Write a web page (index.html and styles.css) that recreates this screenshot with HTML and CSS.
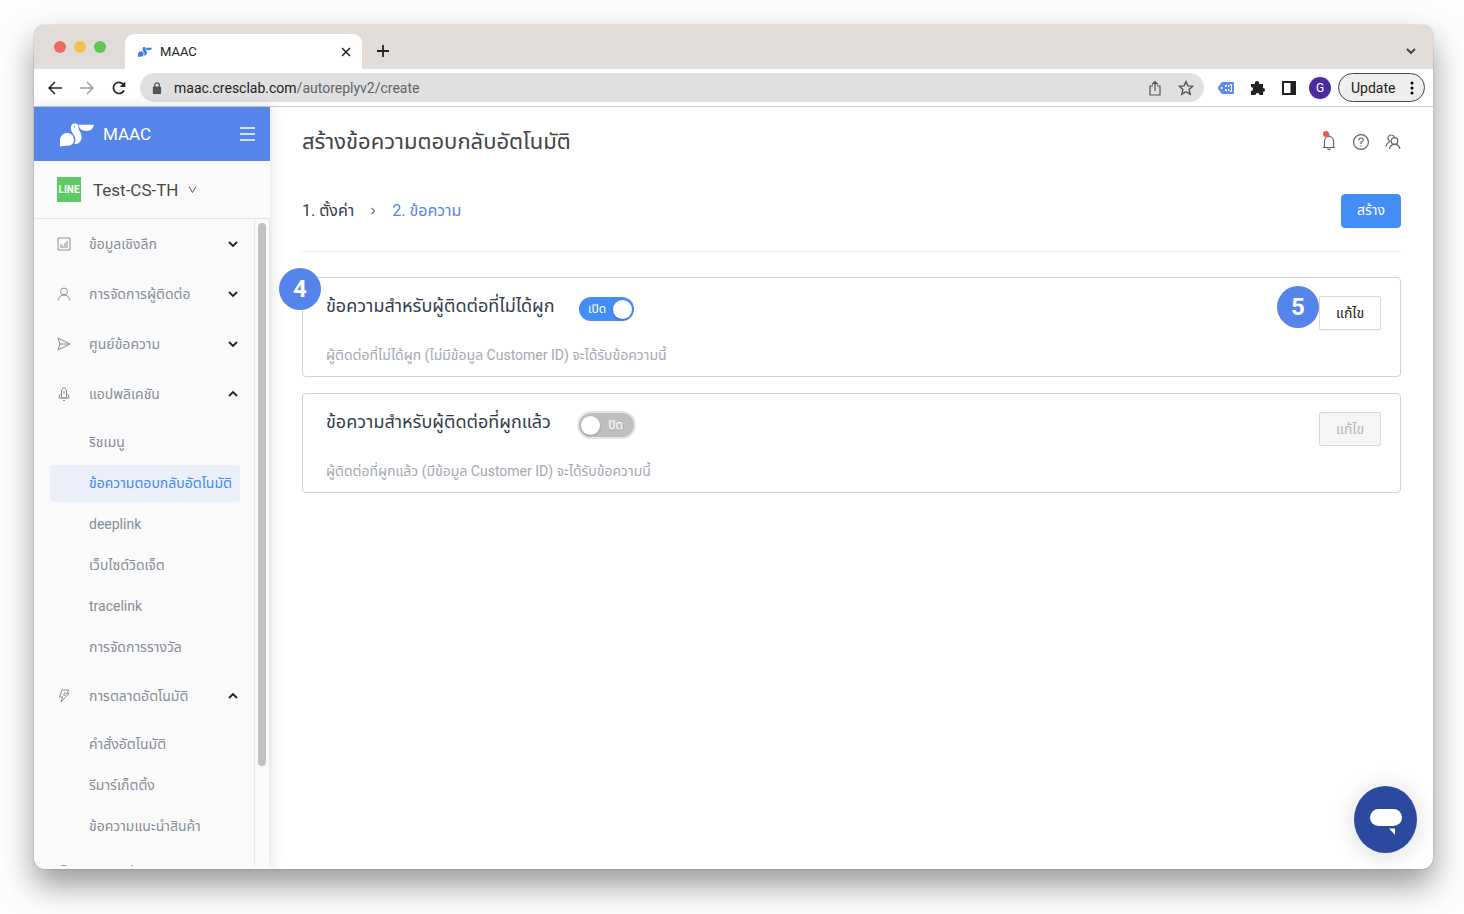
FILE: index.html
```html
<!DOCTYPE html>
<html lang="th">

	<head>
		<meta charset="utf-8">
		<meta name="viewport" content="width=device-width, initial-scale=1.0">
		<title>MAAC</title>
		<link rel="stylesheet" href="styles.css">
	</head>
	<body>
		<!-- shared shapes -->
		<svg class="sprite" aria-hidden="true">
			<symbol id="chevron" viewBox="0 0 12 12">
				<path d="M2 4l4 4 4-4" fill="none" stroke="currentColor" stroke-width="1.800"/>
			</symbol>
			<symbol id="bird" viewBox="0 0 33 23">
				<path d="M0 23V16.500C0 12 3.500 9.500 7 9.500S13.500 12 13.500 16 10.500 22 6.500 22Q2.500 22 0 23z"/>
				<path d="M10.500 4.500C10.500 1.500 12.500 0 14.500 0c2 0 3.500 1.500 3.500 4C18 7.500 21 9 21 13.500 21 18 18 20.500 13.500 20.500 15.500 18 15.500 15 14 12.500 12.500 10 10.500 8 10.500 4.500z"/>
				<path d="M18 1.500H33Q32 7.500 25.500 7.500 19 7.500 18 1.500z"/>
				<circle cx="14" cy="3.500" r=".7" fill="#5584ea"/>
			</symbol>
		</svg>

		<div class="window">
			<div class="tabs">
				<div class="lights">
					<span class="light red"></span>
					<span class="light yellow"></span>
					<span class="light green"></span>
				</div>
				<div class="tab">
					<svg class="tab-logo" viewBox="0 0 33 23"><use href="#bird"/></svg>
					<span class="tab-name">MAAC</span>
					<button type="button" class="plain" aria-label="Close tab">
						<svg width="10" height="10" viewBox="0 0 10 10"><path d="M1 1l8 8M9 1l-8 8" stroke="#222" stroke-width="1.5"/></svg>
					</button>
				</div>
				<button type="button" class="plain new-tab" aria-label="New tab">
					<svg width="14" height="14" viewBox="0 0 14 14"><path d="M7 1v12M1 7h12" stroke="#222" stroke-width="1.800"/></svg>
				</button>
				<button type="button" class="plain tab-list" aria-label="Search tabs">
					<svg width="12" height="12"><use href="#chevron"/></svg>
				</button>
			</div>

			<div class="toolbar">
				<button type="button" class="plain" aria-label="Back">
					<svg width="14" height="14" viewBox="0 0 14 14"><path d="M7 1L1 7l6 6M1 7h13" fill="none" stroke="#222" stroke-width="1.5"/></svg>
				</button>
				<button type="button" class="plain" aria-label="Forward">
					<svg width="14" height="14" viewBox="0 0 14 14"><path d="M7 1l6 6-6 6M13 7H0" fill="none" stroke="#999" stroke-width="1.4"/></svg>
				</button>
				<button type="button" class="plain" aria-label="Reload">
					<svg width="14" height="14" viewBox="0 0 14 14"><path d="M12 9.5A5.6 5.6 0 1 1 11.5 3.5" fill="none" stroke="#222" stroke-width="1.7"/><path d="M13.3 .5v5.500h-5.500z" fill="#222"/></svg>
				</button>
				<div class="address">
					<svg width="10" height="12" viewBox="0 0 10 13"><rect x="0.500" y="5" width="9" height="8" rx="1" fill="#555"/><path d="M2.500 5.500V3.500a2.500 2.500 0 0 1 5 0v2" fill="none" stroke="#555" stroke-width="1.400"/></svg>
					<label for="url">maac.cresclab.com</label>
					<input type="text" id="url" value="/autoreplyv2/create">
					<button type="button" class="plain" aria-label="Share">
						<svg width="14" height="16" viewBox="0 0 14 16"><path d="M5 6H2v9h10V6H9M7 11V1.500M4 4.500l3-3 3 3" fill="none" stroke="#555" stroke-width="1.200"/></svg>
					</button>
					<button type="button" class="plain" aria-label="Bookmark">
						<svg width="16" height="16" viewBox="0 0 16 16"><path d="M8 1.500l1.900 4.400 4.800.4-3.600 3.200 1.100 4.700L8 11.700l-4.200 2.500 1.100-4.700L1.300 6.300l4.800-.4z" fill="none" stroke="#555" stroke-width="1.400"/></svg>
					</button>
				</div>
				<div class="extensions">
					<svg width="16" height="12" viewBox="0 0 16 12"><path d="M4 0h11q1 0 1 1v10q0 1-1 1H4L0 7V5z" fill="#5b8def"/><path d="M7 3h2v2H7zM7 7h2v2H7zM10 3h1.500v2H10zM10 7h1.500v2H10z" fill="#fff"/><path d="M12 2.500h1.500v7H12" fill="none" stroke="#fff"/><circle cx="3.500" cy="6" r="1" fill="#fff"/></svg>
					<svg width="16" height="16" viewBox="0 0 16 16"><path d="M1 4h4a2.200 2.200 0 1 1 4 0h4v4a2 2 0 1 1 0 4v3H9.500a2 2 0 0 0-4 0H1v-4a2 2 0 0 0 0-4z" fill="#222"/></svg>
					<svg width="14" height="14" viewBox="0 0 14 14"><path d="M1 1h12v12H1z" fill="none" stroke="#222" stroke-width="2"/><path d="M8.500 1H13v12H8.500z" fill="#222"/></svg>
					<span class="avatar">G</span>
				</div>
				<button type="button" class="update">
					Update
					<svg width="4" height="14" viewBox="0 0 4 14"><circle cx="2" cy="2" r="1.500"/><circle cx="2" cy="7" r="1.500"/><circle cx="2" cy="12" r="1.500"/></svg>
				</button>
			</div>

			<div class="app">
				<aside class="sidebar">
					<div class="brand">
						<svg class="brand-logo" viewBox="0 0 33 23"><use href="#bird"/></svg>
						<span class="brand-name">MAAC</span>
						<button type="button" class="plain" aria-label="Menu">
							<svg width="15" height="14" viewBox="0 0 15 14"><path d="M0 1h15M0 7h15M0 13h15" stroke="#fff" stroke-width="1.300"/></svg>
						</button>
					</div>
					<button type="button" class="account">
						<span class="line-logo">LINE</span>
						Test-CS-TH
						<svg width="9" height="9" viewBox="0 0 9 9"><path d="M1 1.500l3.500 6L8 1.500" fill="none" stroke="#555"/></svg>
					</button>
					<div class="menu-area">
						<nav class="menu">
							<a href="#" class="item">
								<svg class="icon" viewBox="0 0 14 14"><path d="M1 1h12v12H1zM4 11V7M6 11V8.500M8 11V6M10 11V4"/></svg>
								<span>ข้อมูลเชิงลึก</span>
								<svg class="arrow"><use href="#chevron"/></svg>
							</a>
							<a href="#" class="item">
								<svg class="icon" viewBox="0 0 14 14"><circle cx="7" cy="4.500" r="3.500"/><path d="M1 13.500C1.500 10 4 8 7 8s5.500 2 6 5.500"/></svg>
								<span>การจัดการผู้ติดต่อ</span>
								<svg class="arrow"><use href="#chevron"/></svg>
							</a>
							<a href="#" class="item">
								<svg class="icon" viewBox="0 0 14 14"><path d="M1 1l12 6L1 13l2-6zM3 7h10"/></svg>
								<span>ศูนย์ข้อความ</span>
								<svg class="arrow"><use href="#chevron"/></svg>
							</a>
							<a href="#" class="item">
								<svg class="icon" viewBox="0 0 14 14"><path d="M4.500 11V4Q5 1.500 7 .5 9 1.500 9.500 4v7zM4.500 6.500L2 9v2h10V9L9.500 6.500M6 13.500h2M7 4v3"/></svg>
								<span>แอปพลิเคชัน</span>
								<svg class="arrow up"><use href="#chevron"/></svg>
							</a>
							<div class="submenu">
								<a href="#">ริชเมนู</a>
								<a href="#" class="active">ข้อความตอบกลับอัตโนมัติ</a>
								<a href="#">deeplink</a>
								<a href="#">เว็บไซต์วิดเจ็ต</a>
								<a href="#">tracelink</a>
								<a href="#">การจัดการรางวัล</a>
							</div>
							<a href="#" class="item">
								<svg class="icon" viewBox="0 0 14 14"><path d="M5 1h7L9.500 4.500H12L4 13l1.500-5H2.500z"/><path d="M8 3L6.500 6H9"/></svg>
								<span>การตลาดอัตโนมัติ</span>
								<svg class="arrow up"><use href="#chevron"/></svg>
							</a>
							<div class="submenu">
								<a href="#">คำสั่งอัตโนมัติ</a>
								<a href="#">รีมาร์เก็ตติ้ง</a>
								<a href="#">ข้อความแนะนำสินค้า</a>
							</div>
							<a href="#" class="item">
								<svg class="icon" viewBox="0 0 14 14"><circle cx="7" cy="7" r="6.500"/></svg>
								<span>บริการต่างๆ</span>
							</a>
						</nav>
						<div class="scroll"><div class="thumb"></div></div>
					</div>
				</aside>

				<main class="content">
					<header class="page-head">
						<h1>สร้างข้อความตอบกลับอัตโนมัติ</h1>
						<div class="head-icons">
							<button type="button" class="plain bell" aria-label="Notifications">
								<svg width="16" height="18" viewBox="0 0 16 18"><path d="M3.500 14.500V8a4.500 4.500 0 0 1 9 0v6.500M2 14.500h12M8 1.500v2M6.500 15.500q1.500 2.500 3 0"/></svg>
								<span class="dot"></span>
							</button>
							<button type="button" class="plain" aria-label="Help">
								<svg width="16" height="18" viewBox="0 0 16 18"><circle cx="8" cy="9" r="7.400"/><path d="M5.700 7.200Q5.800 5 8 5t2.300 2Q10.300 8.300 8 9.300V11M8 12.200v1.300"/></svg>
							</button>
							<button type="button" class="plain" aria-label="Users">
								<svg width="16" height="18" viewBox="0 0 16 18"><circle cx="9.500" cy="8" r="3.300"/><path d="M4.500 16Q5 11.500 9.500 11.300T15 16M9.500 4Q8.500 2 6.500 2A3.200 3.200 0 0 0 4 7.500L5.500 8.500M5 8.500Q1.500 10 1 13.500"/></svg>
							</button>
						</div>
					</header>
					<div class="steps">
						<span>1. ตั้งค่า</span>
						<svg width="6" height="8" viewBox="0 0 6 8"><path d="M1.500 1l3 3-3 3" fill="none" stroke="#6b7280" stroke-width="1.200"/></svg>
						<span class="current">2. ข้อความ</span>
						<button type="button" class="btn primary">สร้าง</button>
					</div>

					<section class="card">
						<span class="badge badge-card">4</span>
						<div class="card-text">
							<div class="card-title">
								<h2 id="unbound">ข้อความสำหรับผู้ติดต่อที่ไม่ได้ผูก</h2>
								<label class="switch">
									<input type="checkbox" role="switch" aria-labelledby="unbound" checked>
									<span>เปิด</span>
								</label>
							</div>
							<p>ผู้ติดต่อที่ไม่ได้ผูก (ไม่มีข้อมูล Customer ID) จะได้รับข้อความนี้</p>
						</div>
						<div class="edit">
							<button type="button" class="btn">แก้ไข</button>
							<span class="badge badge-edit">5</span>
						</div>
					</section>

					<section class="card">
						<div class="card-text">
							<div class="card-title">
								<h2 id="bound">ข้อความสำหรับผู้ติดต่อที่ผูกแล้ว</h2>
								<label class="switch">
									<input type="checkbox" role="switch" aria-labelledby="bound">
									<span>ปิด</span>
								</label>
							</div>
							<p>ผู้ติดต่อที่ผูกแล้ว (มีข้อมูล Customer ID) จะได้รับข้อความนี้</p>
						</div>
						<div class="edit">
							<button type="button" class="btn" disabled>แก้ไข</button>
						</div>
					</section>
				</main>
			</div>

			<button type="button" class="chat" aria-label="Chat">
				<svg width="32" height="28" viewBox="0 0 32 28"><rect width="32" height="17" rx="8.500" y="1"/><path d="M19 20.500h6V27z"/></svg>
			</button>
		</div>
	</body>
</html>
```
FILE: styles.css
```css
	* {
		box-sizing: border-box;
	}

	body {
		margin: 0;
		height: 100vh;
		padding: 25px 31px 45px 34px;
		background: #fdfdfd;
		font-family: Roboto, "Noto Sans Thai", "Noto Sans", sans-serif;
		font-size: 14px;
		color: #323c4d;
		overflow: hidden;
	}

	.sprite {
		display: none;
	}

	a {
		color: inherit;
		text-decoration: none;
	}

	button, input {
		font: inherit;
		color: inherit;
	}

	button {
		cursor: pointer;
	}

	svg {
		flex: none;
	}

	.plain {
		display: flex;
		align-items: center;
		padding: 0;
		border: none;
		background: none;
	}

	.window {
		position: relative;
		display: flex;
		flex-direction: column;
		height: 100%;
		border-radius: 11px;
		background: #fff;
		overflow: hidden;
		box-shadow: 0 0 1px rgba(0, 0, 0, .6), 0 16px 32px rgba(0, 0, 0, .4);
	}

	/* browser */
	.tabs {
		display: flex;
		align-items: center;
		flex: none;
		height: 44px;
		padding: 0 16px 0 20px;
		background: #e2dcd8;
	}

	.lights {
		display: flex;
		gap: 8px;
		width: 71px;
	}

	.light {
		width: 12px;
		height: 12px;
		border-radius: 50%;
	}

	.red {
		background: #ed6a5e;
	}

	.yellow {
		background: #f5bf4f;
	}

	.green {
		background: #61c554;
	}

	.tab {
		display: flex;
		align-items: center;
		align-self: flex-end;
		gap: 8px;
		width: 237px;
		height: 35px;
		padding: 0 11px 0 13px;
		border-radius: 9px 9px 0 0;
		background: #fff;
		color: #222;
		font-size: 13px;
	}

	.tab-logo {
		width: 14px;
		height: 10px;
		fill: #4a7ce0;
	}

	.tab-name {
		flex: 1;
	}

	.new-tab {
		margin-left: 14px;
		padding-top: 8px;
	}

	.tab-list {
		margin-left: auto;
		padding-top: 8px;
	}

	.toolbar {
		display: flex;
		align-items: center;
		flex: none;
		gap: 18px;
		height: 38px;
		padding: 0 8px 0 14px;
		border-bottom: 1px solid #ccc;
	}

	.address {
		display: flex;
		align-items: center;
		flex: 1;
		height: 29px;
		margin-left: -4px;
		padding: 0 10px 0 12px;
		border-radius: 15px;
		background: #e0e0e0;
		color: #222;
	}

	.address label {
		margin-left: 12px;
	}

	.address input {
		flex: 1;
		min-width: 0;
		padding: 0;
		border: none;
		background: none;
		color: #5f6368;
		outline: none;
	}

	.address button {
		margin-left: 16px;
	}

	.extensions {
		display: flex;
		align-items: center;
		gap: 16px;
		margin-left: -4px;
	}

	.avatar {
		width: 22px;
		height: 22px;
		margin-left: -3px;
		border-radius: 50%;
		background: #4b2aa0;
		color: #fff;
		font-size: 12px;
		line-height: 22px;
		text-align: center;
	}

	.update {
		display: flex;
		align-items: center;
		justify-content: space-between;
		width: 87px;
		height: 29px;
		margin-left: -11px;
		padding: 0 10px 0 12px;
		border: 1px solid #444;
		border-radius: 15px;
		background: #eee;
		color: #222;
	}

	/* sidebar */
	.app {
		display: flex;
		flex: 1;
		min-height: 0;
	}

	.sidebar {
		display: flex;
		flex-direction: column;
		flex: none;
		width: 236px;
		background: #fafafa;
		box-shadow: 0 0 14px rgba(0, 0, 0, .14);
	}

	.brand {
		display: flex;
		align-items: center;
		flex: none;
		gap: 9px;
		height: 54px;
		padding: 0 15px 0 26px;
		background: #5584ea;
		color: #fff;
		font-size: 17px;
	}

	.brand-logo {
		width: 34px;
		height: 26px;
		padding-top: 2px;
		fill: #fff;
	}

	.brand-name {
		flex: 1;
	}

	.account {
		display: flex;
		align-items: center;
		flex: none;
		gap: 9px;
		height: 58px;
		padding: 0 23px;
		border: none;
		border-bottom: 1px solid #e3e3e3;
		background: none;
		color: #4a4a4a;
		font-size: 17px;
	}

	.line-logo {
		width: 24px;
		height: 25px;
		margin-right: 3px;
		background: #5ecb62;
		color: #fff;
		font-size: 10px;
		font-weight: bold;
		line-height: 25px;
		text-align: center;
	}

	.menu-area {
		display: flex;
		flex: 1;
		min-height: 0;
		margin-bottom: 3px;
	}

	.menu {
		flex: 1;
		overflow: hidden;
		color: #868d98;
	}

	.item {
		display: flex;
		align-items: center;
		height: 50px;
		padding: 0 15px 0 23px;
	}

	.item span {
		flex: 1;
		margin-left: 18px;
	}

	.icon {
		width: 14px;
		height: 14px;
		fill: none;
		stroke: #868d98;
	}

	.arrow {
		width: 12px;
		height: 12px;
		color: #222;
	}

	.up {
		transform: rotate(180deg);
	}

	.submenu {
		display: flex;
		flex-direction: column;
		gap: 4px;
		padding: 5px 14px 5px 16px;
	}

	.submenu a {
		padding-left: 39px;
		border-radius: 4px;
		line-height: 37px;
		height: 37px;
		white-space: nowrap;
	}

	.submenu .active {
		background: #ebeff9;
		color: #4289f7;
	}

	.scroll {
		width: 16px;
		padding: 4px 3px;
		border-left: 1px solid #e8e8e8;
		border-right: 1px solid #e8e8e8;
	}

	.thumb {
		width: 8px;
		height: 85%;
		border-radius: 4px;
		background: #c1c1c1;
	}

	/* page */
	.content {
		flex: 1;
		min-width: 0;
		padding: 0 32px;
	}

	.page-head {
		display: flex;
		align-items: center;
		justify-content: space-between;
		height: 70px;
	}

	h1, h2, p {
		margin: 0;
		font-weight: normal;
	}

	h1 {
		color: #444;
		font-size: 22px;
		line-height: 30px;
	}

	.head-icons {
		display: flex;
		gap: 16px;
	}

	.head-icons svg {
		fill: none;
		stroke: #5c6470;
		stroke-width: 1.2;
	}

	.bell {
		position: relative;
	}

	.dot {
		position: absolute;
		top: -2px;
		left: 2px;
		width: 6px;
		height: 6px;
		border-radius: 50%;
		background: #f5544d;
	}

	.steps {
		display: flex;
		align-items: center;
		gap: 16px;
		height: 75px;
		padding-bottom: 7px;
		border-bottom: 1px solid #ececec;
		font-size: 16px;
	}

	.current {
		color: #5584ea;
	}

	.btn {
		min-width: 62px;
		height: 34px;
		padding: 0 15px;
		border: 1px solid #d9d9d9;
		border-radius: 2px;
		background: #fff;
		color: #222;
		font-size: 14px;
		box-shadow: 0 1px 1px rgba(0, 0, 0, .05);
	}

	.btn:disabled {
		background: #f5f5f5;
		color: #b8b8b8;
		box-shadow: none;
	}

	.primary {
		margin-left: auto;
		min-width: 60px;
		border-color: #438df7;
		border-radius: 4px;
		background: #438df7;
		color: #fff;
	}

	.card {
		position: relative;
		display: flex;
		justify-content: space-between;
		min-height: 100px;
		margin-top: 16px;
		padding: 13px 19px 9px 23px;
		border: 1px solid #cfd3d9;
		border-radius: 4px;
	}

	.steps + .card {
		margin-top: 25px;
	}

	.card-text {
		display: flex;
		flex-direction: column;
		justify-content: space-between;
	}

	.card-title {
		display: flex;
		align-items: flex-end;
		gap: 17px;
	}

	h2 {
		min-width: 236px;
		font-size: 18px;
		line-height: 30px;
	}

	p {
		color: #a3a9b3;
		font-size: 14px;
		line-height: 24px;
	}

	.switch {
		display: flex;
		align-items: center;
		flex-direction: row-reverse;
		justify-content: space-between;
		width: 55px;
		height: 24px;
		padding: 0 2px 0 9px;
		border-radius: 12px;
		background: #438df7;
		color: #fff;
		font-size: 12px;
		cursor: pointer;
	}

	.switch input {
		appearance: none;
		width: 19px;
		height: 19px;
		margin: 0;
		border-radius: 50%;
		background: #fff;
		box-shadow: 0 1px 3px rgba(0, 0, 0, .2);
	}

	.switch:has(input:not(:checked)) {
		flex-direction: row;
		padding: 0 11px 0 2px;
		background: #bfbfbf;
		box-shadow: 0 0 0 2px #e6e6e6;
	}

	.edit {
		position: relative;
		padding-top: 5px;
	}

	.badge {
		position: absolute;
		width: 42px;
		height: 42px;
		border-radius: 50%;
		background: #5584ea;
		color: #fff;
		font-size: 24px;
		font-weight: bold;
		line-height: 43px;
		text-align: center;
	}

	.badge-card {
		top: -10px;
		left: -24px;
	}

	.badge-edit {
		top: -5px;
		right: 100%;
	}

	.chat {
		position: absolute;
		right: 16px;
		bottom: 16px;
		display: grid;
		place-items: center;
		width: 63px;
		height: 67px;
		padding: 4px 0 0;
		border: none;
		border-radius: 50%;
		background: #2a499f;
		fill: #fff;
		box-shadow: 0 2px 24px rgba(0, 20, 40, .16);
	}

	.submenu:last-of-type {
		padding-bottom: 2px;
	}
```
